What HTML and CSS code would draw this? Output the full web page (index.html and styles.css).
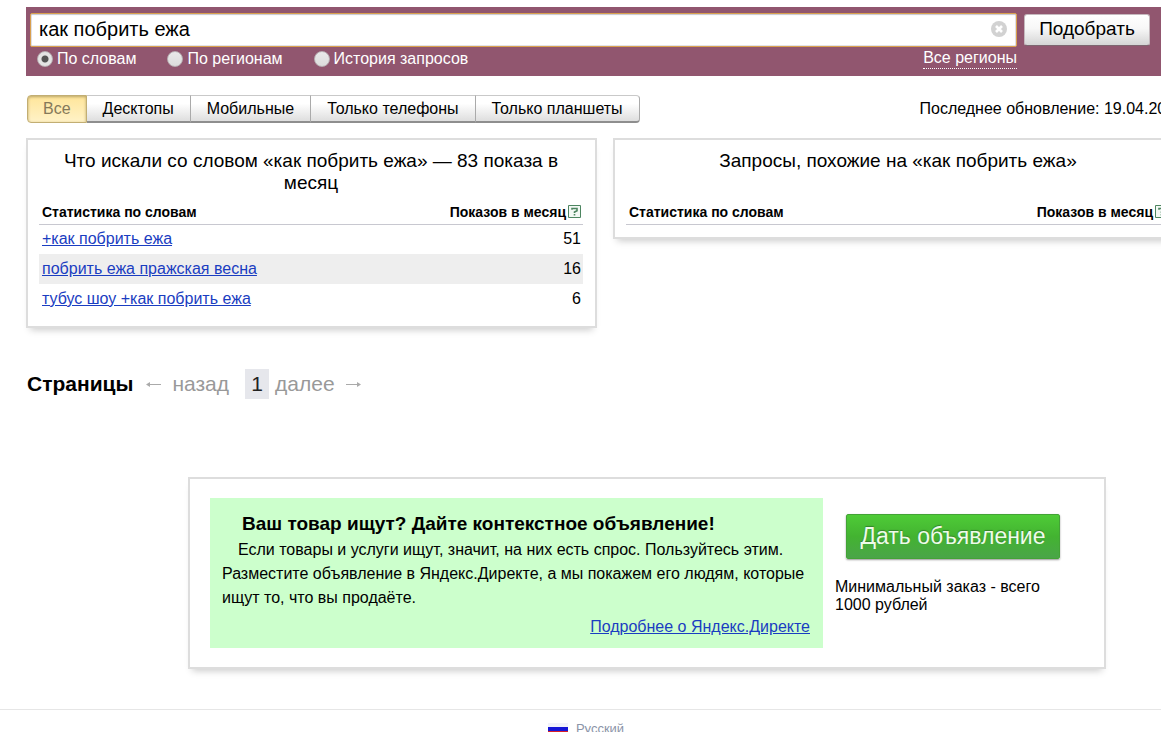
FILE: index.html
```
<!DOCTYPE html>
<html lang="ru">
<head>
<meta charset="utf-8">
<title>Подбор слов</title>
<link rel="stylesheet" href="styles.css">
</head>
<body>
<div class="page">
  <form class="search">
    <div class="search-main">
      <div class="search-box">
        <input class="search-input" type="text" value="как побрить ежа" aria-label="Запрос">
        <button class="search-clear" type="button" aria-label="Очистить">
          <svg width="16" height="16" viewBox="0 0 16 16"><circle cx="8" cy="8" r="8" fill="#d2d2d2"/><path d="M5 5l6 6M11 5l-6 6" stroke="#fff" stroke-width="2.6"/></svg>
        </button>
      </div>
      <div class="search-options">
        <label class="option"><input class="radio" type="radio" name="mode" checked>По словам</label>
        <label class="option"><input class="radio" type="radio" name="mode">По регионам</label>
        <label class="option"><input class="radio" type="radio" name="mode">История запросов</label>
        <a class="regions" href="#">Все регионы</a>
      </div>
    </div>
    <button class="submit" type="submit">Подобрать</button>
  </form>

  <div class="toolbar">
    <div class="tabs">
      <button class="tab tab-active" type="button">Все</button>
      <button class="tab" type="button">Десктопы</button>
      <button class="tab" type="button">Мобильные</button>
      <button class="tab" type="button">Только телефоны</button>
      <button class="tab" type="button">Только планшеты</button>
    </div>
    <span class="updated">Последнее обновление: 19.04.2018</span>
  </div>

  <main class="results">
    <section class="card">
      <h2 class="card-title">Что искали со словом «как побрить ежа» — 83 показа в месяц</h2>
      <table class="stats">
        <thead>
          <tr><th>Статистика по словам</th><th class="count"><span class="count-head">Показов в месяц<a class="help" href="#" aria-label="Справка"><svg width="13" height="13" viewBox="0 0 13 13"><path d="M.5.5h12v12H.5z" fill="#f3f8f4" stroke="#4d8560"/><path d="M4 4.8V3.5h5v2.2L6.5 7v1M6.5 9v1.6" fill="none" stroke="#4d8560" stroke-width="1.6"/></svg></a></span></th></tr>
        </thead>
        <tbody>
          <tr><td><a class="link" href="#">+как побрить ежа</a></td><td class="count">51</td></tr>
          <tr><td><a class="link" href="#">побрить ежа пражская весна</a></td><td class="count">16</td></tr>
          <tr><td><a class="link" href="#">тубус шоу +как побрить ежа</a></td><td class="count">6</td></tr>
        </tbody>
      </table>
    </section>
    <section class="card">
      <h2 class="card-title">Запросы, похожие на «как побрить ежа»</h2>
      <table class="stats">
        <thead>
          <tr><th>Статистика по словам</th><th class="count"><span class="count-head">Показов в месяц<a class="help" href="#" aria-label="Справка"><svg width="13" height="13" viewBox="0 0 13 13"><path d="M.5.5h12v12H.5z" fill="#f3f8f4" stroke="#4d8560"/><path d="M4 4.8V3.5h5v2.2L6.5 7v1M6.5 9v1.6" fill="none" stroke="#4d8560" stroke-width="1.6"/></svg></a></span></th></tr>
        </thead>
      </table>
    </section>
  </main>

  <nav class="pager">
    <b class="pager-title">Страницы</b>
    <span class="pager-prev"><svg width="15" height="8" viewBox="0 0 15 8"><path d="M1 4.500H15" fill="none" stroke="#aaa"/><path d="M0 4.500l4-2.500v5z" fill="#aaa"/></svg>назад</span>
    <span class="pager-current">1</span>
    <span class="pager-next">далее<svg width="15" height="8" viewBox="0 0 15 8"><path d="M0 4.500h14" fill="none" stroke="#aaa"/><path d="M15 4.500l-4-2.500v5z" fill="#aaa"/></svg></span>
  </nav>

  <section class="promo card">
    <div class="promo-text">
      <h3 class="promo-title">Ваш товар ищут? Дайте контекстное объявление!</h3>
      <p class="promo-body">Если товары и услуги ищут, значит, на них есть спрос. Пользуйтесь этим. Разместите объявление в Яндекс.Директе, а мы покажем его людям, которые ищут то, что вы продаёте.</p>
      <a class="link promo-more" href="#">Подробнее о Яндекс.Директе</a>
    </div>
    <div class="promo-order">
      <button class="promo-button" type="button">Дать объявление</button>
      <p class="promo-note">Минимальный заказ - всего 1000 рублей</p>
    </div>
  </section>

  <footer class="footer">
    <a class="lang" href="#"><span class="flag"></span>Русский</a>
  </footer>
</div>
</body>
</html>
```
FILE: styles.css
```
* { box-sizing: border-box; }
body {
  margin: 0;
  overflow: hidden;
  background: #fff;
  color: #000;
  font: 16px/18px "Liberation Sans", Arial, sans-serif;
}
button, input { font-family: inherit; }
h2, h3, p { margin: 0; }

.page { min-width: 1210px; padding-top: 7px; }

.search {
  display: flex;
  align-items: flex-start;
  gap: 7px;
  margin-left: 26px;
  padding: 6px 60px 7px 4px;
  background: #91566f;
}
.search-main { flex: 1; }
.search-box { position: relative; }
.search-input {
  display: block;
  width: 100%;
  height: 34px;
  padding: 0 40px 2px 8px;
  border: 1px solid #d9a04e;
  border-radius: 2px;
  background: #fff;
  box-shadow: inset 0 1px 1px #c9c9d2, inset 0 0 0 1px #e2e2e8;
  color: #000;
  font-size: 20px;
}
.search-clear {
  position: absolute;
  top: 8px;
  right: 10px;
  width: 16px;
  height: 16px;
  padding: 0;
  border: 0;
  background: none;
}
.search-clear svg { display: block; }
.search-options {
  display: flex;
  gap: 31px;
  padding: 1px 0 0 7px;
  color: #fff;
}
.option { display: flex; align-items: center; gap: 4px; line-height: 21px; }
.radio {
  appearance: none;
  width: 16px;
  height: 16px;
  margin: 0;
  border: 1px solid #b9b0b4;
  border-radius: 50%;
  background: linear-gradient(#e9e9e9, #dcdcdc);
}
.radio:checked { background: radial-gradient(circle, #555 3px, #e4e4e4 4px); }
.regions {
  align-self: flex-start;
  margin-left: auto;
  border-bottom: 1px dotted #fff;
  color: #fff;
  line-height: 20px;
  text-decoration: none;
}
.submit {
  width: 126px;
  height: 32px;
  margin-top: 1px;
  padding: 0 0 2px;
  border: 1px solid #c5b9be;
  border-bottom-color: #7d6670;
  border-radius: 3px;
  background: linear-gradient(#fff, #f7f7f7 45%, #d5d5d5);
  color: #000;
  font-size: 19px;
}

.toolbar {
  display: flex;
  align-items: center;
  justify-content: space-between;
  margin: 19px 26px 0 27px;
}
.tabs { display: flex; }
.tab {
  height: 28px;
  padding: 0 16px;
  border: 1px solid #c9c9c9;
  border-left-width: 0;
  border-right-color: #aaa;
  border-bottom: 2px solid #8e8e8e;
  background: linear-gradient(#fff 30%, #dedede);
  color: #000;
  font-size: 16px;
}
.tab:last-child { border-radius: 0 4px 4px 0; }
.tab-active {
  padding: 0 15px;
  border: 1px solid #c2ae73;
  border-radius: 4px 0 0 4px;
  background: linear-gradient(#ffe59a, #fff2c7);
  box-shadow: inset 0 1px 3px #b9a468;
  color: #85795a;
}

.results {
  display: grid;
  grid-template-columns: 1fr 1fr;
  align-items: start;
  gap: 16px;
  margin: 15px 26px 0;
}
.card {
  border: 2px solid #ddd;
  background: #fff;
  box-shadow: 0 6px 7px -4px #ccc;
}
.results .card { padding: 10px 12px 12px 11px; }
.card-title {
  min-height: 44px;
  padding: 0 12px;
  font-size: 19px;
  font-weight: normal;
  line-height: 22px;
  text-align: center;
}
.stats { width: 100%; border-collapse: collapse; }
.stats th {
  height: 30px;
  padding: 6px 3px 0;
  border-bottom: 1px solid #c8c8d0;
  font-size: 14px;
  text-align: left;
}
.stats td { height: 30px; padding: 0 3px; }
.stats tbody tr:nth-child(even) { background: #eee; }
.stats .count { text-align: right; padding-right: 2px; }
.count-head { display: inline-flex; align-items: center; gap: 2px; }
.help svg { display: block; }
.link { color: #1a3dc1; text-decoration: underline; }

.pager {
  display: flex;
  align-items: center;
  margin: 41px 27px 0;
  color: #999;
  font-size: 21px;
  line-height: 30px;
}
.pager-title { color: #000; }
.pager-prev, .pager-next { display: flex; align-items: center; gap: 11px; }
.pager-prev { margin: 0 16px 0 13px; }
.pager-current { width: 24px; margin-right: 6px; background: #e6e7ec; color: #222; text-align: center; }

.promo {
  display: flex;
  gap: 12px;
  width: 918px;
  margin: 78px 0 0 188px;
  padding: 19px 20px;
}
.promo-text { width: 613px; padding: 12px 13px 12px 12px; background: #cfc; }
.promo-title { padding-left: 20px; font-size: 19px; line-height: 28px; }
.promo-body { line-height: 24px; text-indent: 16px; }
.promo-more { display: block; margin-top: 8px; text-align: right; }
.promo-order { flex: 1; padding-top: 16px; }
.promo-button {
  display: block;
  width: 214px;
  height: 45px;
  margin-left: 11px;
  padding: 0;
  border: 1px solid #43a336;
  border-radius: 2px;
  background: linear-gradient(#4ecb37, #43b331 50%, #4aa548);
  box-shadow: 0 1px 2px #999;
  color: #eefbea;
  font-size: 23px;
  text-shadow: 0 -1px 1px #34822a;
}
.promo-note { width: 220px; margin-top: 19px; }

.footer {
  display: flex;
  justify-content: center;
  margin-top: 40px;
  padding: 10px 38px 12px 0;
  border-top: 1px solid #e6e6e6;
}
.lang {
  display: flex;
  align-items: center;
  gap: 8px;
  color: #8b94a8;
  font-size: 13px;
  text-decoration: none;
}
.flag { width: 20px; height: 12px; background: linear-gradient(#f2f2fa 33%, #1616d6 33% 67%, #d8202a 67%); }
```
